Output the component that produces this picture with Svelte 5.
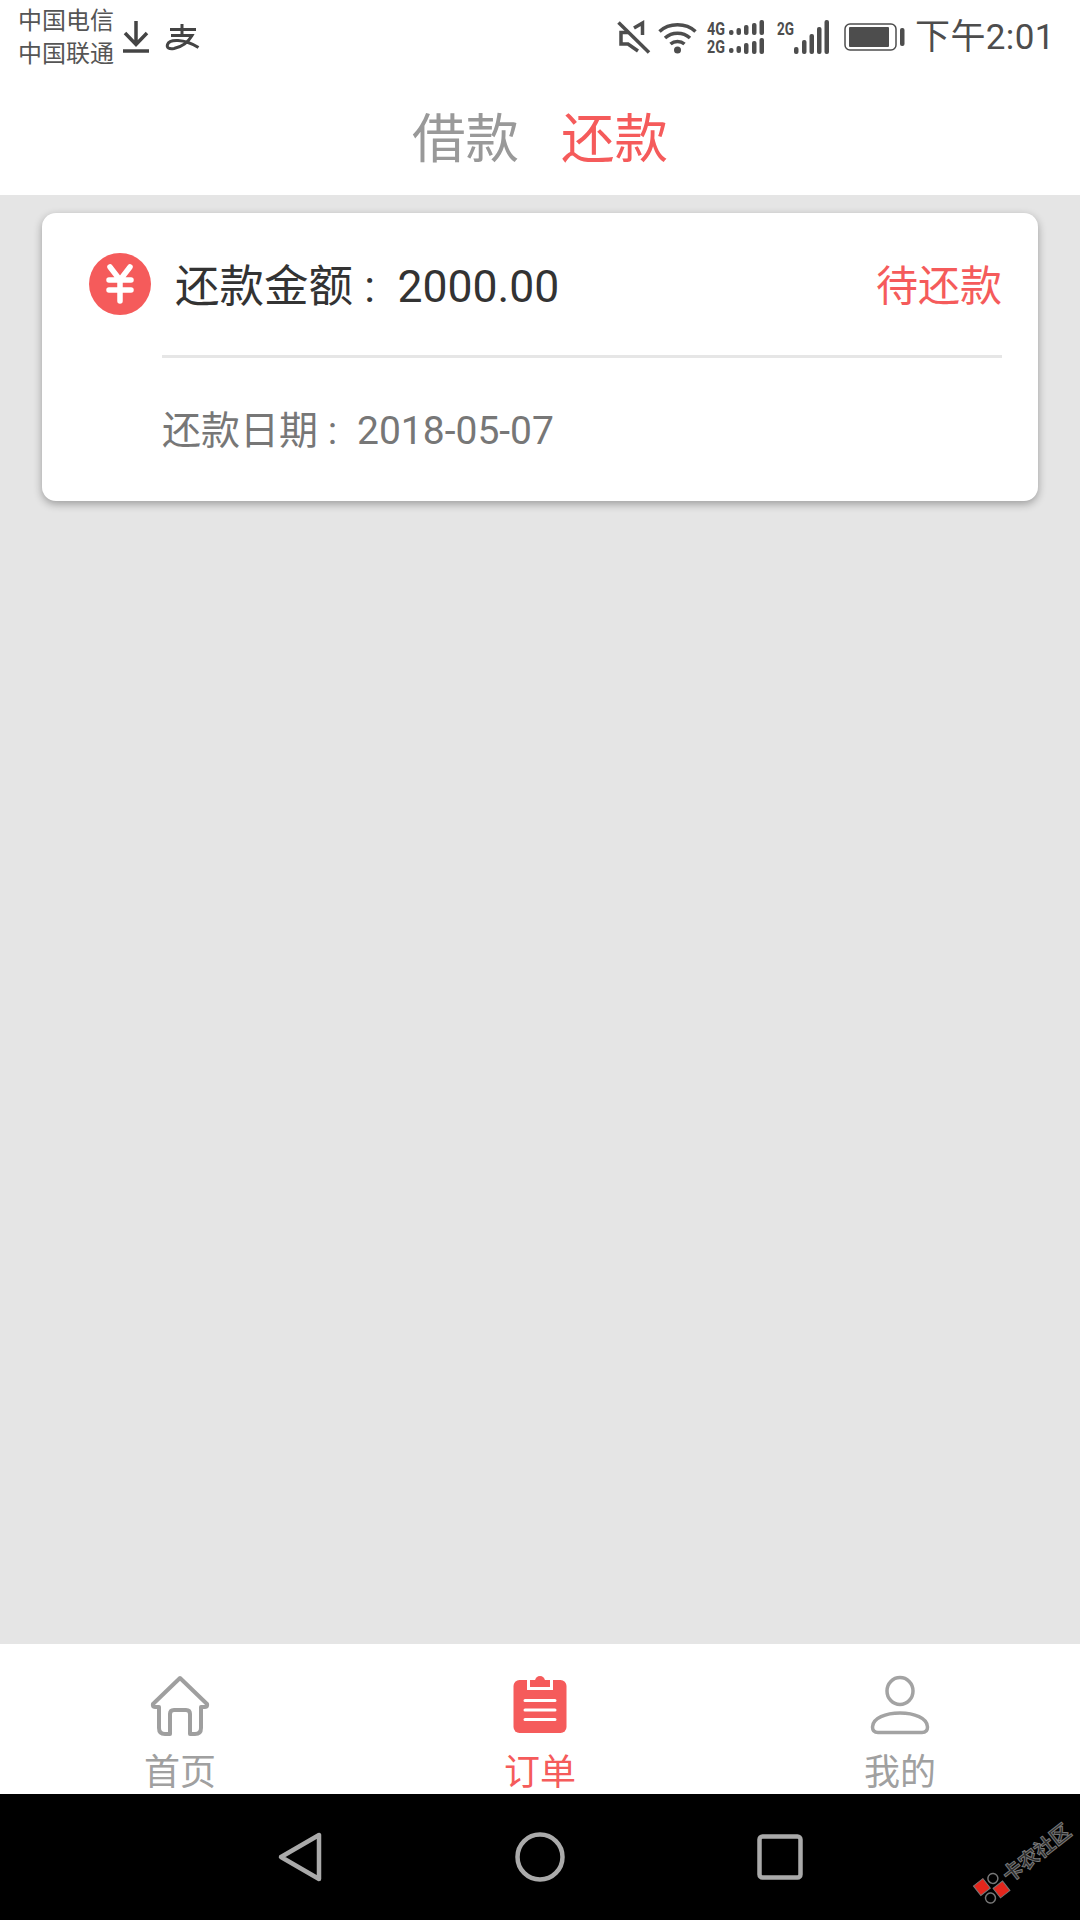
<script>
  const tabs = [
    { label: '首页', icon: 'home' },
    { label: '订单', icon: 'order', active: true },
    { label: '我的', icon: 'user' }
  ];
</script>

<div class="page">
  <div class="status">
    <div class="carriers"><span>中国电信</span><span>中国联通</span></div>
    <svg class="dl" viewBox="0 0 28 32" fill="none" stroke="#444" stroke-width="3.500"><path d="M14 0V23M3 12L14 23.500L25 12"/><path d="M1 30H27"/></svg>
    <svg class="pay" viewBox="0 0 33 27" fill="none" stroke="#444" stroke-width="3"><path d="M4 5.500H30M16 0V11M5 11.500H26Q20 22 8 24.500Q0 25.500 1.500 20.500Q3 16 12 16.500Q22 17 32.500 23.500"/></svg>
    <div class="spacer"></div>
    <svg class="mute" viewBox="0 0 33 33" fill="none" stroke="#4d4d4d" stroke-width="3.500"><path d="M11 11.500H4V23H11L21 30"/><path d="M17 7L25.500 2V14"/><path d="M1.500 1.500L32 31.500"/></svg>
    <svg class="wifi" viewBox="0 0 39 33" fill="none" stroke="#4d4d4d" stroke-width="3.500"><path d="M1.500 10.500C11 1.500 28 1.500 37.500 10.500M7 17C14 10.500 25 10.500 32 17M12.500 23C16.500 19.500 22.500 19.500 26.500 23"/><circle cx="19.500" cy="29" r="3.500" fill="#4d4d4d" stroke="none"/></svg>
    <svg class="sim2" viewBox="0 0 58 34">
      <text class="net" x="0" y="15" textLength="18" lengthAdjust="spacingAndGlyphs">4G</text>
      <text class="net" x="0" y="33" textLength="18" lengthAdjust="spacingAndGlyphs">2G</text>
      <g fill="#4d4d4d">
        <rect x="22" y="10" width="4.500" height="5" rx="2"/><rect x="29.500" y="8" width="4.500" height="7" rx="2"/><rect x="37" y="5" width="4.500" height="10" rx="2"/><rect x="45" y="3" width="4.500" height="12" rx="2"/><rect x="52.500" y="0" width="4.500" height="15" rx="2"/>
        <rect x="22" y="28" width="4.500" height="5" rx="2"/><rect x="29.500" y="26" width="4.500" height="7" rx="2"/><rect x="37" y="23" width="4.500" height="11" rx="2"/><rect x="45" y="21" width="4.500" height="13" rx="2"/><rect x="52.500" y="18" width="4.500" height="16" rx="2"/>
      </g>
    </svg>
    <svg class="sim1" viewBox="0 0 52 34">
      <text class="net" x="0" y="15" textLength="17" lengthAdjust="spacingAndGlyphs">2G</text>
      <g fill="#4d4d4d">
        <rect x="17" y="27" width="4.500" height="7" rx="2"/><rect x="25" y="20" width="4.500" height="14" rx="2"/><rect x="32.500" y="14" width="4.500" height="20" rx="2"/><rect x="40" y="7" width="4.500" height="27" rx="2"/><rect x="47.500" y="0" width="4.500" height="34" rx="2"/>
      </g>
    </svg>
    <svg class="battery" viewBox="0 0 61 28">
      <rect x="1" y="1" width="51" height="26" rx="5" fill="none" stroke="#4d4d4d" stroke-width="1.500"/>
      <rect x="5" y="4" width="40" height="20" rx="1" fill="#4d4d4d"/>
      <rect x="56" y="5" width="4.500" height="18" rx="2" fill="#4d4d4d"/>
    </svg>
    <span class="time">下午2:01</span>
  </div>

  <div class="header">
    <span class="tab">借款</span>
    <span class="tab on">还款</span>
  </div>

  <main class="content">
    <section class="card">
      <div class="top">
        <div class="coin">
          <svg viewBox="0 0 62 62" fill="none" stroke="#fff" stroke-width="5.500" stroke-linecap="round"><path d="M21 14L31 27L41 14M20 27H42M20 37H42M31 27V48"/></svg>
        </div>
        <span class="amount">还款金额<span class="colon">:</span>2000.00</span>
        <span class="state">待还款</span>
      </div>
      <div class="date">还款日期<span class="colon">:</span>2018-05-07</div>
    </section>
  </main>

  <nav class="tabbar">
    {#each tabs as t}
      <div class="item" class:active={t.active}>
        {#if t.icon === 'home'}
          <svg viewBox="0 0 60 60" fill="none" stroke="#9f9f9f" stroke-width="4" stroke-linejoin="round"><path d="M30 2L57 28Q58 31 55 31H51V52Q51 58 45 58H40V38Q40 34 36 34H24Q20 34 20 38V58H15Q9 58 9 52V31H5Q2 31 3 28Z"/></svg>
        {:else if t.icon === 'order'}
          <svg viewBox="0 0 60 60"><rect x="3.500" y="4" width="53" height="53" rx="6" fill="#f55b5b"/><rect x="17" y="0" width="26" height="14" fill="#fff"/><rect x="20" y="4" width="20" height="7" fill="#f55b5b"/><circle cx="30" cy="5" r="5" fill="#f55b5b"/><path d="M15 24.500H45M15 34H45M15 43.500H45" stroke="#fff" stroke-width="3" stroke-linecap="round"/></svg>
        {:else}
          <svg viewBox="0 0 60 60" fill="none" stroke="#a3a3a3" stroke-width="3.500"><ellipse cx="30" cy="15" rx="13" ry="13.500"/><path d="M2.500 51C2.500 42 16 37 30 37C44 37 57.500 42 57.500 51Q57.500 56.500 52 56.500H8Q2.500 56.500 2.500 51Z"/></svg>
        {/if}
        <span>{t.label}</span>
      </div>
    {/each}
  </nav>

  <div class="sysnav">
    <svg class="back" viewBox="0 0 44 50" fill="none" stroke="#aaa" stroke-width="4.500" stroke-linejoin="round"><path d="M41 3V47L3 25Z"/></svg>
    <svg class="homebtn" viewBox="0 0 50 50" fill="none" stroke="#aaa" stroke-width="4.500"><circle cx="25" cy="25" r="22.500"/></svg>
    <svg class="recent" viewBox="0 0 46 46" fill="none" stroke="#aaa" stroke-width="4.500"><rect x="2.500" y="2.500" width="41" height="41" rx="3"/></svg>
    <div class="mark">
      <svg viewBox="0 0 30 30"><rect x="2" y="2" width="12" height="12" fill="#e3261c" stroke="#777"/><rect x="16" y="16" width="12" height="12" fill="#e3261c" stroke="#777"/><circle cx="8" cy="22" r="5" fill="none" stroke="#777" stroke-width="1.500"/><circle cx="22" cy="8" r="5" fill="none" stroke="#777" stroke-width="1.500"/></svg>
      <span>卡农社区</span>
    </div>
  </div>
</div>

<style>
  :global(body) { margin: 0; background: #e5e5e5; }
  .page {
    width: 1080px; height: 1920px; display: flex; flex-direction: column; overflow: hidden;
    font-family: Roboto, "Noto Sans CJK SC", sans-serif; background: #e5e5e5;
  }
  svg { display: block; flex: none; overflow: visible; }
  .status { height: 74px; background: #fff; display: flex; align-items: center; padding: 0 25px 0 18px; color: #4d4d4d; }
  .carriers { display: flex; flex-direction: column; font-size: 24px; line-height: 33px; margin-top: 1px; color: #555; }
  .dl { width: 28px; height: 32px; margin-left: 8px; }
  .pay { width: 33px; height: 27px; margin-left: 16px; }
  .spacer { flex: 1; }
  .mute { width: 33px; height: 33px; }
  .wifi { width: 39px; height: 33px; margin-left: 8px; }
  .sim2 { width: 58px; height: 34px; margin-left: 10px; }
  .sim1 { width: 52px; height: 34px; margin-left: 12px; }
  .battery { width: 61px; height: 28px; margin-left: 15px; }
  .net { font: 700 19px Roboto, sans-serif; fill: #4d4d4d; }
  .time { font-size: 35px; line-height: 40px; margin-left: 10px; margin-top: 2px; width: 140px; white-space: nowrap; letter-spacing: 0.4px; color: #4d4d4d; }

  .header { height: 121px; background: #fff; display: flex; justify-content: center; align-items: center; gap: 42px; }
  .tab { font-size: 53.500px; line-height: 62px; color: #999; margin-top: 10px; }
  .tab.on { color: #f55b5b; }

  .content { flex: 1; padding: 18px 42px 0; }
  .card { height: 288px; box-sizing: border-box; background: #fff; border-radius: 14px; box-shadow: 0 3px 9px rgba(0,0,0,.32); padding: 0 36px 0 47px; }
  .top { height: 145px; display: flex; align-items: center; position: relative; }
  .top::after { content: ""; position: absolute; left: 73px; right: 0; bottom: 0; height: 3px; background: #e6e6e6; }
  .coin { width: 62px; height: 62px; border-radius: 50%; background: #f55b5b; margin-top: -3px; }
  .coin svg { width: 62px; height: 62px; }
  .amount { font-size: 44.500px; line-height: 52px; color: #333; margin-left: 24px; margin-top: 2px; }
  .colon { display: inline-block; box-sizing: border-box; width: 1em; padding-left: .25em; }
  .state { font-size: 42px; line-height: 52px; color: #f55b5b; margin-left: auto; margin-top: 3px; }
  .date { margin: 0 0 0 73px; height: 145px; display: flex; align-items: center; font-size: 39px; line-height: 48px; color: #777; }

  .tabbar { height: 150px; background: #fff; display: grid; grid-template-columns: repeat(3, 1fr); }
  .item { display: flex; flex-direction: column; align-items: center; padding-top: 32px; color: #a0a0a0; font-size: 36px; line-height: 36px; overflow: hidden; }
  .item svg { width: 60px; height: 60px; }
  .item span { margin-top: 19px; }
  .item.active { color: #f55b5b; }

  .sysnav { height: 126px; background: #000; display: grid; grid-template-columns: repeat(3, 240px); justify-content: center; justify-items: center; align-items: center; position: relative; }
  .back { width: 44px; height: 50px; }
  .homebtn { width: 50px; height: 50px; }
  .recent { width: 46px; height: 46px; }
  .mark { position: absolute; left: 968px; top: 54px; display: flex; align-items: center; gap: 2px; transform: rotate(-38deg); color: #2a2a2a; font-size: 20px; font-weight: 700; line-height: 26px; white-space: nowrap; -webkit-text-stroke: 1px #777; }
  .mark svg { width: 30px; height: 30px; }
</style>
